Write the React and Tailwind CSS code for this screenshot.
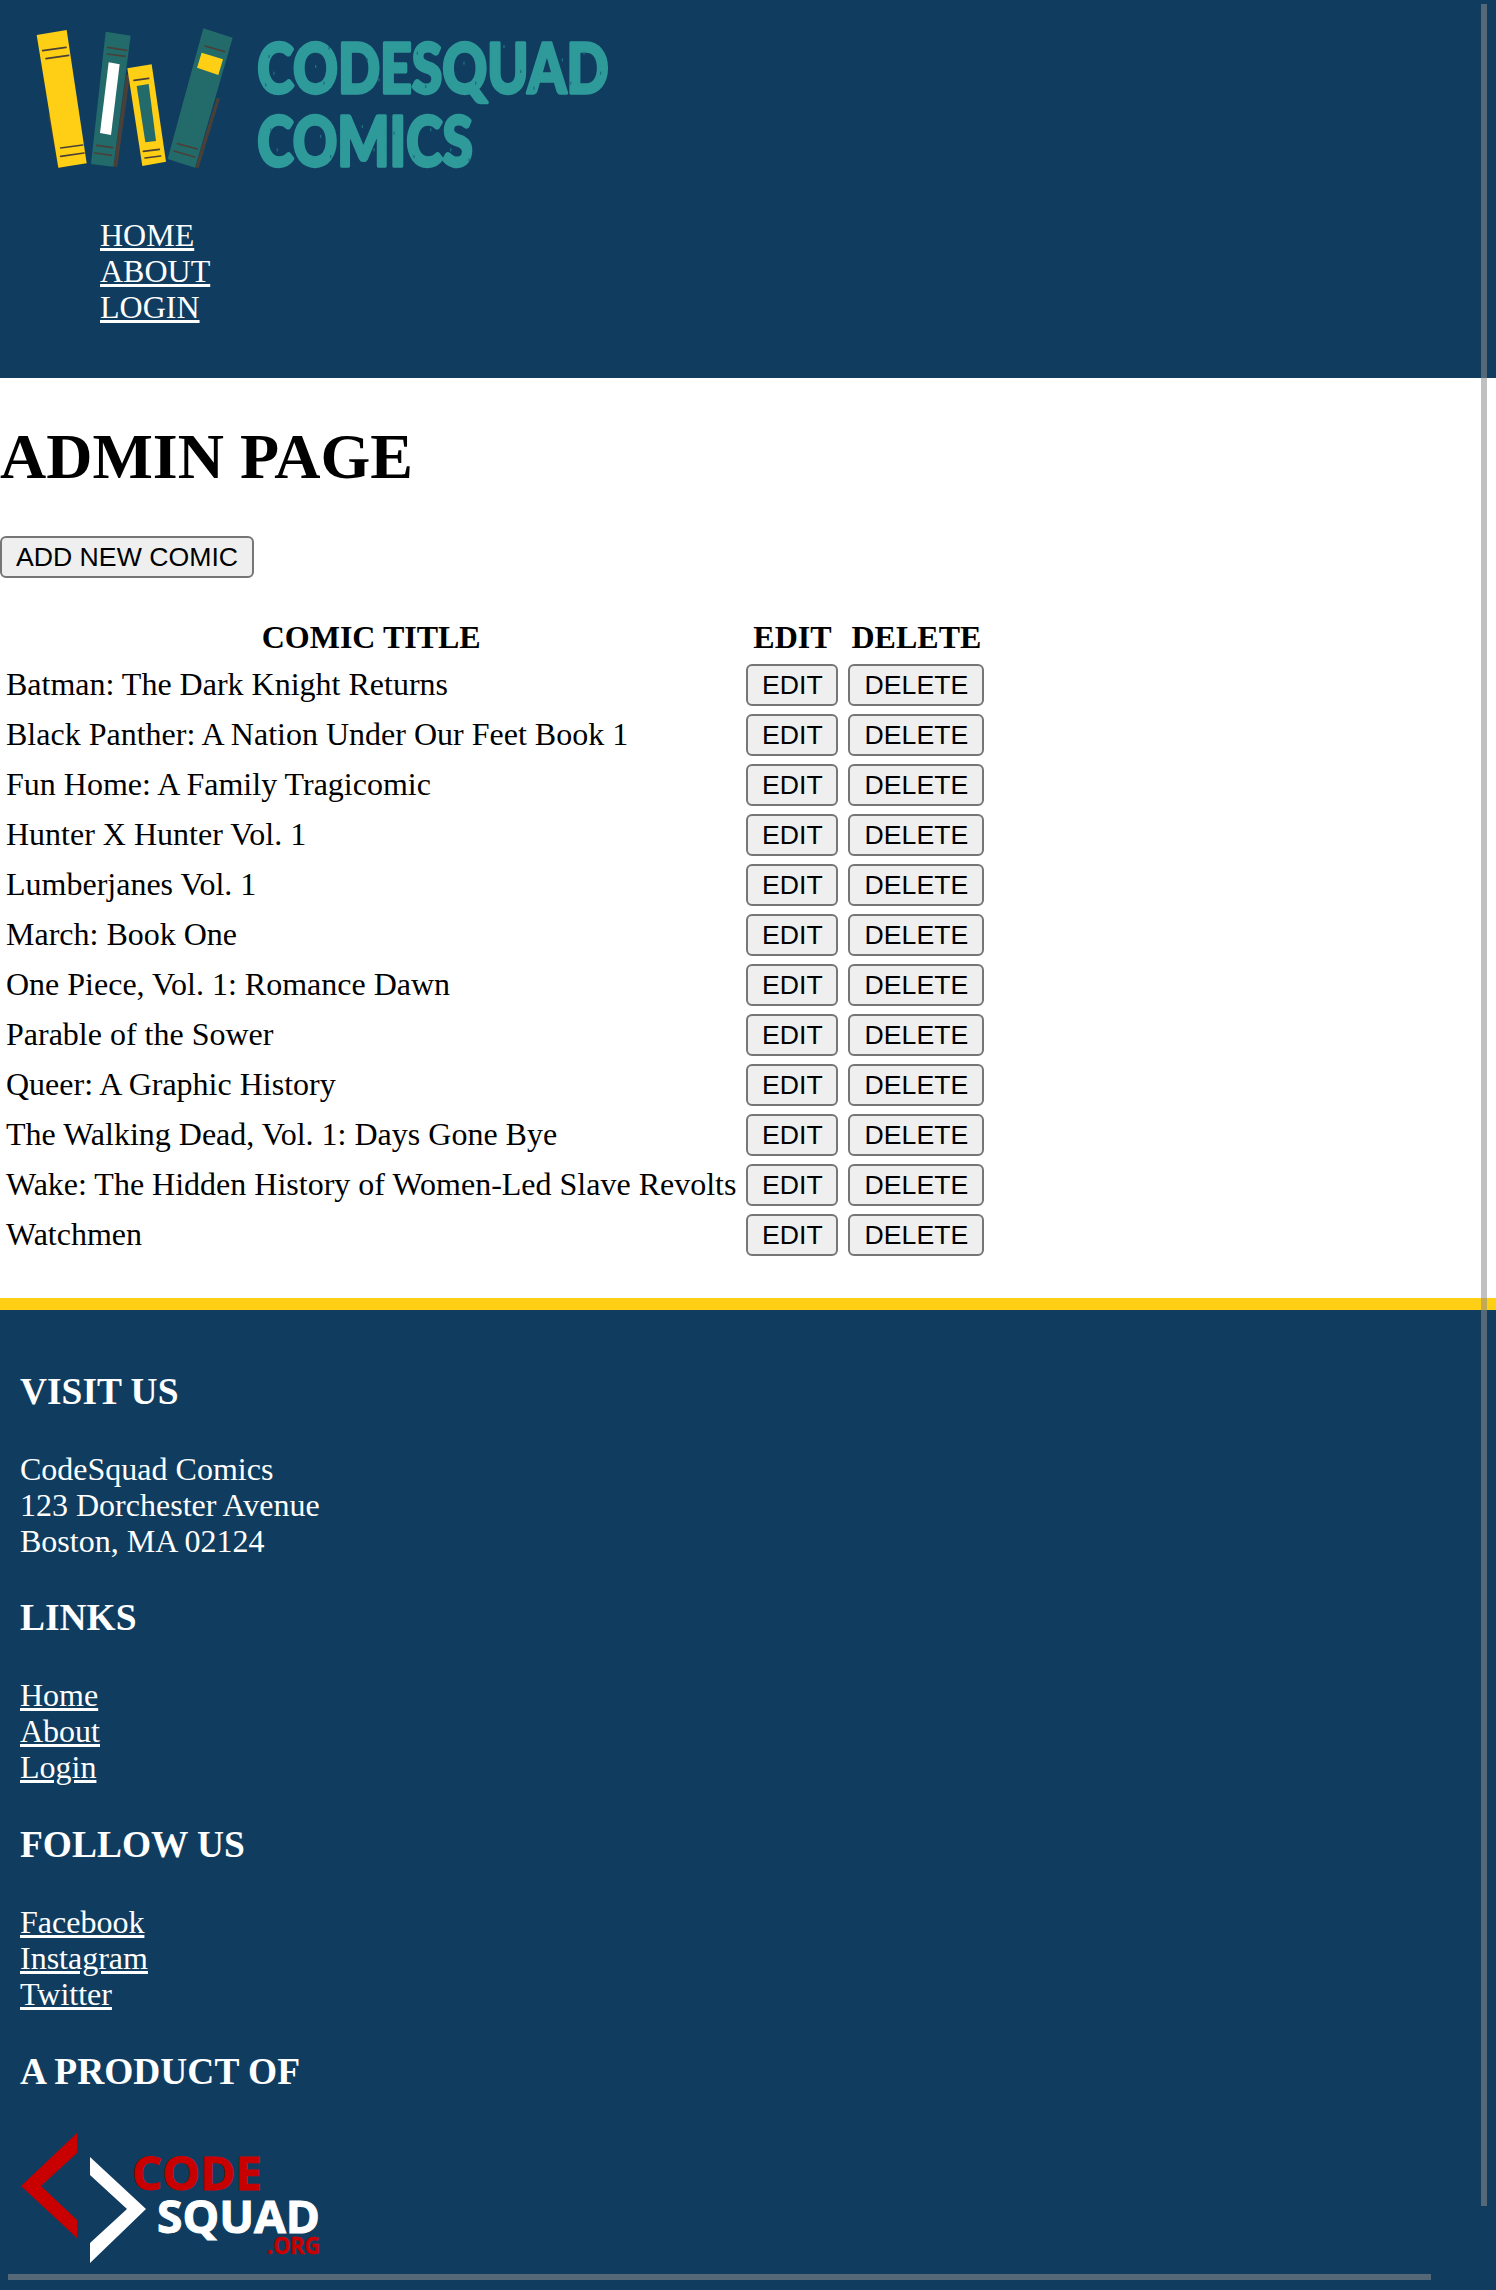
import React from 'react';

const COMICS = [
  'Batman: The Dark Knight Returns',
  'Black Panther: A Nation Under Our Feet Book 1',
  'Fun Home: A Family Tragicomic',
  'Hunter X Hunter Vol. 1',
  'Lumberjanes Vol. 1',
  'March: Book One',
  'One Piece, Vol. 1: Romance Dawn',
  'Parable of the Sower',
  'Queer: A Graphic History',
  'The Walking Dead, Vol. 1: Days Gone Bye',
  'Wake: The Hidden History of Women-Led Slave Revolts',
  'Watchmen',
];

// worn spots on the wordmark
const SPECKS = [
  [745, 120], [760, 170], [735, 205], [885, 150], [910, 200], [925, 95], [1040, 130], [1075, 190],
  [1190, 110], [1215, 210], [1330, 140], [1365, 200], [1450, 90], [1500, 165], [1540, 215],
  [1625, 130], [1650, 200], [1690, 110], [1740, 170], [750, 340], [770, 400], [900, 360],
  [930, 420], [1025, 330], [1060, 400], [1120, 350], [1180, 420], [1230, 340], [1290, 400], [1345, 430],
];

const btn =
  "h-[42px] bg-[#efefef] border-2 border-[#767676] rounded-[6px] text-black text-[26.67px] leading-none font-['Liberation_Sans',sans-serif]";

const Stripe = ({ d }) => <path d={d} stroke="#4a4038" strokeWidth="5" strokeLinecap="round" fill="none" />;

// books + wordmark, coordinates taken from the logo at 3x
const SiteLogo = () => (
  <svg width="600" height="160" viewBox="0 0 1800 480" className="block shrink-0">
    <path d="M85 300L115 460L130 458L100 300Z" fill="#4a4038" />
    <path d="M50 60L140 45L200 445L115 458Z" fill="#fecf14" />
    <Stripe d="M68 107L138 97" />
    <Stripe d="M78 131L146 121" />
    <Stripe d="M122 399L188 390" />
    <Stripe d="M122 424L192 414" />
    <path d="M318 180L280 455L292 455L330 180Z" fill="#4a4038" />
    <path d="M257 50L332 62L280 455L213 447Z" fill="#236b6b" />
    <path d="M266 142L299 148L273 360L240 354Z" fill="#ffffff" />
    <Stripe d="M263 97L320 106" />
    <Stripe d="M262 117L316 124" />
    <Stripe d="M230 391L278 398" />
    <Stripe d="M224 414L274 421" />
    <path d="M322 160L395 148L438 440L367 453Z" fill="#fecf14" />
    <path d="M350 213L386 207L408 378L376 382Z" fill="#236b6b" />
    <Stripe d="M342 196L386 190" />
    <Stripe d="M370 409L418 403" />
    <Stripe d="M375 429L422 423" />
    <path d="M590 250L525 458L536 458L600 250Z" fill="#4a4038" />
    <path d="M550 40L638 68L525 458L443 432Z" fill="#236b6b" />
    <path d="M545 113L609 133L595 180L531 158Z" fill="#fecf14" />
    <Stripe d="M555 93L614 110" />
    <Stripe d="M472 386L532 402" />
    <Stripe d="M462 408L524 426" />
    <text x="712" y="233" textLength="1054" lengthAdjust="spacingAndGlyphs" fontSize="208" fill="#2f9a9a" stroke="#2f9a9a" strokeWidth="10" strokeLinejoin="round" className="font-['Lato',sans-serif] font-black">CODESQUAD</text>
    <text x="712" y="452" textLength="646" lengthAdjust="spacingAndGlyphs" fontSize="208" fill="#2f9a9a" stroke="#2f9a9a" strokeWidth="10" strokeLinejoin="round" className="font-['Lato',sans-serif] font-black">COMICS</text>
    {SPECKS.map(([x, y]) => (
      <rect key={`${x}-${y}`} x={x} y={y} width="4" height="9" fill="#1d6f7f" />
    ))}
  </svg>
);

const SquadLogo = () => (
  <svg width="320" height="135" viewBox="0 0 320 135" className="block">
    <path d="M77 2L77 22L41 55L77 89L77 107L21 55Z" fill="#c80000" />
    <path d="M90 26L146 78L90 132L90 112L127 78L90 44Z" fill="#ffffff" />
    <text x="132" y="59" textLength="130" lengthAdjust="spacingAndGlyphs" fontSize="47" fill="#c80000" stroke="#c80000" strokeWidth="1" className="font-['Open_Sans',sans-serif] font-bold">CODE</text>
    <text x="157" y="102" textLength="163" lengthAdjust="spacingAndGlyphs" fontSize="45" fill="#ffffff" stroke="#ffffff" strokeWidth="1" className="font-['Open_Sans',sans-serif] font-bold">SQUAD</text>
    <text x="267" y="123" textLength="53" lengthAdjust="spacingAndGlyphs" fontSize="24" fill="#c80000" stroke="#c80000" strokeWidth="0.5" className="font-['Open_Sans',sans-serif] font-bold">.ORG</text>
  </svg>
);

const FooterLinks = ({ links }) => (
  <ul>
    {links.map((l) => (
      <li key={l}>
        <a href="#" className="underline">{l}</a>
      </li>
    ))}
  </ul>
);

const FooterTitle = ({ children }) => (
  <h3 className="text-[37.44px] leading-[44px] font-bold mt-[37.7px] mb-[37px]">{children}</h3>
);

export default function App() {
  return (
    <div className="relative h-[2290px] overflow-hidden bg-white text-black text-[32px] leading-[36px] font-['Liberation_Serif',serif]">
      <header className="h-[378px] bg-[#103d5f] pt-[15px] pl-[20px] text-white">
        <SiteLogo />
        <ul className="mt-[41.5px] pl-[80px]">
          <li><a href="#" className="underline">HOME</a></li>
          <li><a href="#" className="underline">ABOUT</a></li>
          <li><a href="#" className="underline">LOGIN</a></li>
        </ul>
      </header>

      <main className="h-[920px]">
        <h1 className="text-[64px] leading-[74px] font-bold pt-[42px]">ADMIN PAGE</h1>
        <button className={`${btn} w-[254px] mt-[42px] block`}>ADD NEW COMIC</button>
        <table className="mt-[35px] border-separate border-spacing-[4px]">
          <thead>
            <tr>
              <th className="pt-[2px] pr-[2px] pb-[3px] pl-[2px] font-bold">COMIC TITLE</th>
              <th className="pt-[2px] pr-[2px] pb-[3px] pl-[4px] font-bold">EDIT</th>
              <th className="pt-[2px] pr-[2px] pb-[3px] pl-[4px] font-bold">DELETE</th>
            </tr>
          </thead>
          <tbody>
            {COMICS.map((c) => (
              <tr key={c}>
                <td className="pt-[2px] pr-[2px] pb-[5px] pl-[2px] align-middle">{c}</td>
                <td className="p-[2px] pl-[4px] align-middle"><button className={`${btn} w-[92px] block`}>EDIT</button></td>
                <td className="p-[2px] pl-[4px] align-middle"><button className={`${btn} w-[136px] block`}>DELETE</button></td>
              </tr>
            ))}
          </tbody>
        </table>
      </main>

      <footer className="border-t-[12px] border-[#fecf14] bg-[#103d5f] text-white h-[992px] px-[20px] pt-[22px]">
        <FooterTitle>VISIT US</FooterTitle>
        <p>CodeSquad Comics<br />123 Dorchester Avenue<br />Boston, MA 02124</p>
        <FooterTitle>LINKS</FooterTitle>
        <FooterLinks links={['Home', 'About', 'Login']} />
        <FooterTitle>FOLLOW US</FooterTitle>
        <FooterLinks links={['Facebook', 'Instagram', 'Twitter']} />
        <FooterTitle>A PRODUCT OF</FooterTitle>
        <div className="-ml-[20px]">
          <SquadLogo />
        </div>
      </footer>

      {/* overlay scrollbars */}
      <div className="absolute left-[1481px] top-[4px] w-[6px] h-[2202px] bg-[#8c8c8c]/55" />
      <div className="absolute left-[8px] top-[2274px] w-[1423px] h-[6px] bg-[#8c8c8c]/55" />
    </div>
  );
}
